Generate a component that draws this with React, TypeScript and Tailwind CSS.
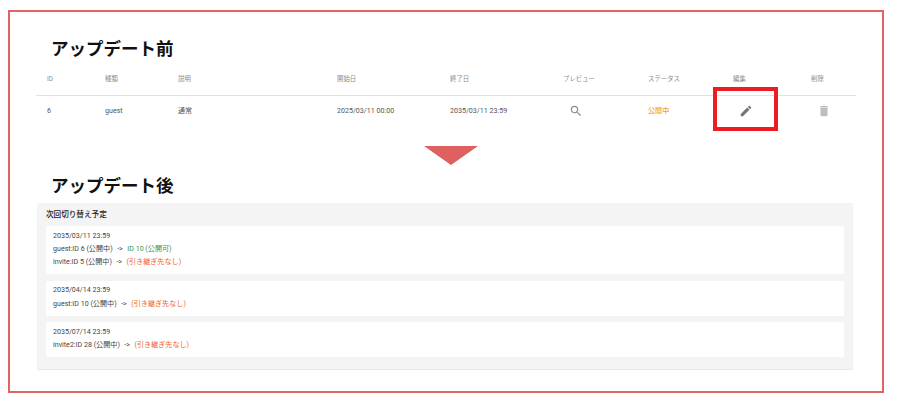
const COLS = "grid grid-cols-[58px_73px_159px_113px_113px_85px_85px_78px_1fr] pl-[11px] items-center";

function EditIcon() {
  return (
    <svg viewBox="0 0 24 24" className="ml-[6px] h-[14px] w-[14px] fill-[#757575]">
      <path d="M3 17.25V21h3.75L17.81 9.94l-3.75-3.75L3 17.25zM20.71 7.04c.39-.39.39-1.02 0-1.41l-2.34-2.34a.9959.9959 0 0 0-1.41 0l-1.83 1.83 3.75 3.75 1.83-1.83z" />
    </svg>
  );
}

function SearchIcon() {
  return (
    <svg viewBox="0 0 24 24" className="ml-[6px] h-[14px] w-[14px] fill-[#8a8a8a]">
      <path d="M15.5 14h-.79l-.28-.27C15.41 12.59 16 11.11 16 9.5 16 5.91 13.09 3 9.5 3S3 5.91 3 9.5 5.91 16 9.5 16c1.61 0 3.09-.59 4.23-1.57l.27.28v.79l5 4.99L20.49 19l-4.99-5zm-6 0C7.01 14 5 11.99 5 9.5S7.01 5 9.5 5 14 7.01 14 9.5 11.99 14 9.5 14z" />
    </svg>
  );
}

function TrashIcon() {
  return (
    <svg viewBox="0 0 24 24" className="ml-[6px] h-[14px] w-[14px] fill-[#bdbdbd]">
      <path d="M6 19c0 1.1.9 2 2 2h8c1.1 0 2-.9 2-2V7H6v12zM19 4h-3.5l-1-1h-5l-1 1H5v2h14V4z" />
    </svg>
  );
}

const schedule = [
  {
    date: "2035/03/11 23:59",
    rows: [
      { from: "guest:ID 6 (公開中)", to: "ID 10 (公開可)", ok: true },
      { from: "invite:ID 5 (公開中)", to: "(引き継ぎ先なし)", ok: false },
    ],
  },
  {
    date: "2035/04/14 23:59",
    rows: [{ from: "guest:ID 10 (公開中)", to: "(引き継ぎ先なし)", ok: false }],
  },
  {
    date: "2035/07/14 23:59",
    rows: [{ from: "invite2:ID 28 (公開中)", to: "(引き継ぎ先なし)", ok: false }],
  },
];

export default function App() {
  return (
    <div className="h-[404px] w-[898px] overflow-hidden bg-white pl-[8px] pt-[10px] font-['Roboto','Noto_Sans_CJK_JP',sans-serif]">
      <div className="relative h-[383px] w-[876px] border-2 border-[#e26363] pl-[26px] pr-[26px]">
        <h2 className="mt-[25px] ml-[15px] text-[17.5px] leading-[24px] font-bold text-[#111]">アップデート前</h2>

        <div className={COLS + " mt-[6px] h-[29px] w-[820px] border-b border-[#e2e2e2] pb-[2px] text-[6.4px] text-[#8a8a8a]"}>
          <span>ID</span>
          <span>種類</span>
          <span>説明</span>
          <span>開始日</span>
          <span>終了日</span>
          <span>プレビュー</span>
          <span>ステータス</span>
          <span>編集</span>
          <span>削除</span>
        </div>
        <div className={COLS + " h-[30px] w-[820px] text-[7.1px] text-[#555]"}>
          <span>6</span>
          <span>guest</span>
          <span>通常</span>
          <span>2025/03/11 00:00</span>
          <span>2035/03/11 23:59</span>
          <SearchIcon />
          <span className="font-medium text-[#f5a623]">公開中</span>
          <EditIcon />
          <TrashIcon />
        </div>

        {/* red highlight over the edit cell */}
        <div className="absolute left-[703px] top-[75px] h-[44px] w-[65px] border-[4px] border-[#ec1c24]" />

        <svg viewBox="0 0 54 19" className="mx-auto mt-[20px] block h-[19px] w-[54px] translate-x-[5px] fill-[#de6060]">
          <polygon points="0,0 54,0 27,19" />
        </svg>

        <h2 className="mt-[9px] ml-[15px] text-[17.5px] leading-[24px] font-bold text-[#111]">アップデート後</h2>

        <div className="mt-[5px] ml-[1px] h-[166px] w-[816px] rounded-[2px] bg-[#f4f4f4] px-[9px] pt-[7px] shadow-[0_1px_1px_rgba(0,0,0,0.1)]">
          <p className="text-[7.6px] leading-[10px] font-medium text-[#222]">次回切り替え予定</p>
          <div className="mt-[6px] flex flex-col gap-[6.5px]">
            {schedule.map((s) => (
              <div key={s.date} className="rounded-[2px] bg-white px-[7px] pt-[4.5px] pb-[5px] text-[7.1px] text-[#444]">
                <p className="h-[10px] leading-[10px]">{s.date}</p>
                <div className="mt-[2.5px]">
                  {s.rows.map((r) => (
                    <p key={r.from} className="flex h-[13px] items-center gap-[4.5px]">
                      <span>{r.from}</span>
                      <span>-&gt;</span>
                      <span className={r.ok ? "text-[#3f9142]" : "text-[#f4622c]"}>{r.to}</span>
                    </p>
                  ))}
                </div>
              </div>
            ))}
          </div>
        </div>
      </div>
    </div>
  );
}
